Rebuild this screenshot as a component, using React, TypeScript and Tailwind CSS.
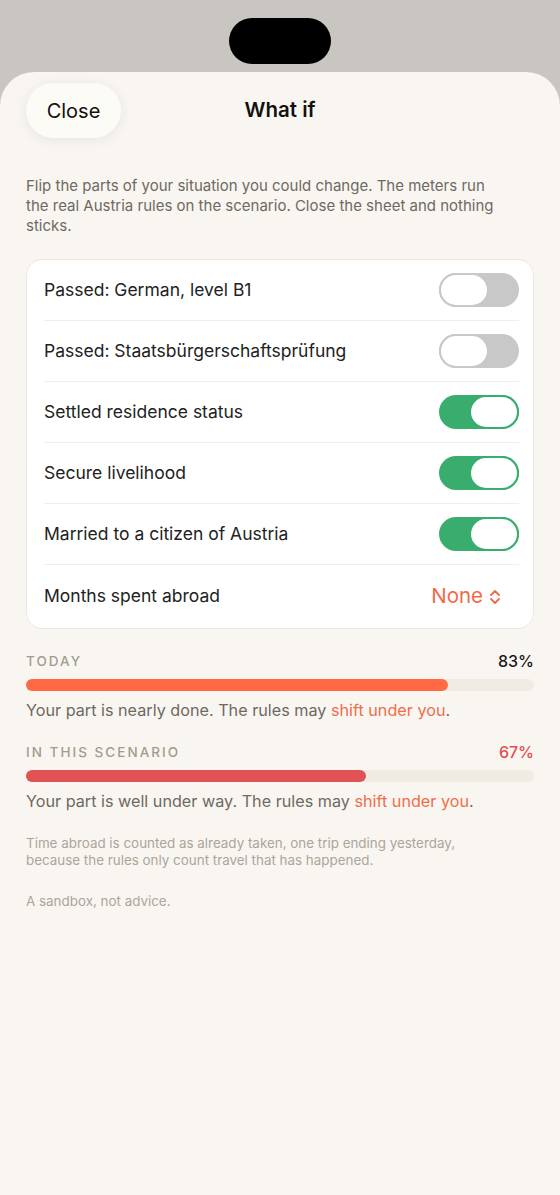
import { useState } from "react";

type Row = { label: string; on: boolean };

const initialRows: Row[] = [
  { label: "Passed: German, level B1", on: false },
  { label: "Passed: Staatsbürgerschaftsprüfung", on: false },
  { label: "Settled residence status", on: true },
  { label: "Secure livelihood", on: true },
  { label: "Married to a citizen of Austria", on: true },
];

function Toggle({ on, onClick }: { on: boolean; onClick: () => void }) {
  return (
    <button
      onClick={onClick}
      className={`flex h-[34px] w-[80px] shrink-0 items-center rounded-full ${
        on ? "justify-end bg-[#38ad6d]" : "justify-start bg-[#c8c8c8]"
      }`}
    >
      <span
        className={`h-[34px] w-[50px] rounded-full border-2 bg-white ${
          on ? "border-[#38ad6d]" : "border-[#c8c8c8]"
        }`}
      />
    </button>
  );
}

function Meter({
  label,
  value,
  color,
  valueClass,
  text,
}: {
  label: string;
  value: number;
  color: string;
  valueClass: string;
  text: string;
}) {
  return (
    <div>
      <div className="flex items-center justify-between">
        <span className="text-[13.5px] font-medium tracking-[0.15em] text-[#a29c90]">{label}</span>
        <span className={`text-[16px] font-medium ${valueClass}`}>{value}%</span>
      </div>
      <div className="mt-[6px] h-[12px] w-full rounded-full bg-[#f0ece3]">
        <div className={`h-full rounded-full ${color}`} style={{ width: `${value}%` }} />
      </div>
      <p className="mt-[8px] text-[16.2px] leading-[22px] text-[#6e6962]">
        {text} The rules may <span className="text-[#f06d4c]">shift under you</span>.
      </p>
    </div>
  );
}

export default function App() {
  const [rows, setRows] = useState(initialRows);

  const flip = (i: number) =>
    setRows((r) => r.map((row, j) => (j === i ? { ...row, on: !row.on } : row)));

  return (
    <div
      className="min-h-[1195px] bg-[#c9c6c1]"
      style={{ fontFamily: "Inter, 'Noto Sans', sans-serif" }}
    >
      {/* status area */}
      <div className="flex h-[72px] justify-center pt-[18px]">
        <div className="h-[46px] w-[102px] rounded-full bg-black" />
      </div>

      {/* sheet */}
      <div className="min-h-[1123px] rounded-t-[34px] bg-[#f9f6f1] px-[26px]">
        <div className="relative flex h-[66px] items-end">
          <button className="h-[55px] w-[95px] rounded-full bg-[#fdfbf6] text-[20px] text-[#111] shadow-[0_2px_14px_rgba(0,0,0,0.07)]">
            Close
          </button>
          <h1 className="pointer-events-none absolute bottom-[12px] left-0 right-0 text-center text-[20.5px] font-semibold text-[#111]">
            What if
          </h1>
        </div>

        <p className="mt-[38px] max-w-[478px] text-[15px] leading-[20px] text-[#6e6962]">
          Flip the parts of your situation you could change. The meters run the real Austria rules on
          the scenario. Close the sheet and nothing sticks.
        </p>

        <div className="mt-[23px] rounded-[16px] border border-[#ede7dd] bg-white pl-[17px] pr-[14px]">
          {rows.map((row, i) => (
            <div
              key={row.label}
              className="flex h-[61px] items-center justify-between border-b border-[#f1ede7]"
            >
              <span className="text-[17.5px] text-[#222]">{row.label}</span>
              <Toggle on={row.on} onClick={() => flip(i)} />
            </div>
          ))}
          <div className="flex h-[63px] items-center justify-between">
            <span className="text-[17.5px] text-[#222]">Months spent abroad</span>
            <span className="mr-[18px] flex items-center gap-[6px] text-[20.5px] text-[#f06a4a]">
              None
              <svg width="12" height="18" viewBox="0 0 12 18" fill="none" stroke="currentColor" strokeWidth="1.8" strokeLinecap="round" strokeLinejoin="round">
                <path d="M2 7l4-4 4 4" />
                <path d="M2 11l4 4 4-4" />
              </svg>
            </span>
          </div>
        </div>

        <div className="mt-[20px]">
          <Meter
            label="TODAY"
            value={83}
            color="bg-[#ff6a45]"
            valueClass="text-[#1a1a1a]"
            text="Your part is nearly done."
          />
        </div>
        <div className="mt-[19px]">
          <Meter
            label="IN THIS SCENARIO"
            value={67}
            color="bg-[#e05253]"
            valueClass="text-[#de4f4f]"
            text="Your part is well under way."
          />
        </div>

        <p className="mt-[23px] max-w-[445px] text-[13.4px] leading-[17px] text-[#aba59b]">
          Time abroad is counted as already taken, one trip ending yesterday, because the rules only
          count travel that has happened.
        </p>
        <p className="mt-[24px] text-[13.4px] leading-[17px] text-[#aba59b]">A sandbox, not advice.</p>
      </div>
    </div>
  );
}
